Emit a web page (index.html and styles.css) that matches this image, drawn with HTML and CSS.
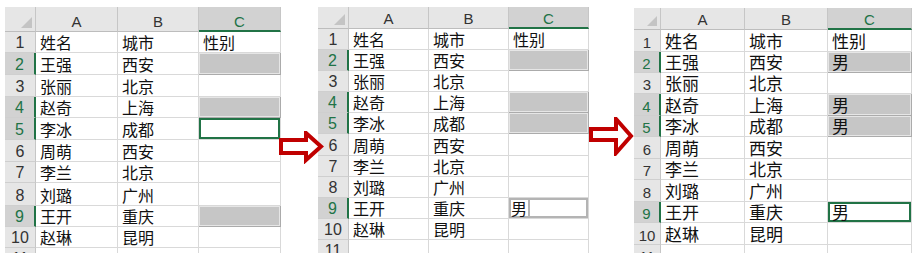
FILE: index.html
```html
<!DOCTYPE html>
<html lang="zh">
<head>
<meta charset="utf-8">
<title>Excel 填充示意</title>
<link rel="stylesheet" href="styles.css">
</head>
<body>
<div class="stage">
  <div class="sheet p1">
    <div class="hd corner"><span class="tri"></span></div>
    <div class="hd">A</div><div class="hd">B</div><div class="hd on">C</div>
    <div class="rh">1</div><div class="c">姓名</div><div class="c">城市</div><div class="c">性别</div>
    <div class="rh on">2</div><div class="c">王强</div><div class="c">西安</div><div class="c g"></div>
    <div class="rh">3</div><div class="c">张丽</div><div class="c">北京</div><div class="c"></div>
    <div class="rh on">4</div><div class="c">赵奇</div><div class="c">上海</div><div class="c g"></div>
    <div class="rh on">5</div><div class="c">李冰</div><div class="c">成都</div><div class="c act"></div>
    <div class="rh">6</div><div class="c">周萌</div><div class="c">西安</div><div class="c"></div>
    <div class="rh">7</div><div class="c">李兰</div><div class="c">北京</div><div class="c"></div>
    <div class="rh">8</div><div class="c">刘璐</div><div class="c">广州</div><div class="c"></div>
    <div class="rh on">9</div><div class="c">王开</div><div class="c">重庆</div><div class="c g"></div>
    <div class="rh">10</div><div class="c">赵琳</div><div class="c">昆明</div><div class="c"></div>
    <div class="rh">11</div><div class="c"></div><div class="c"></div><div class="c"></div>
  </div>

  <div class="sheet p2">
    <div class="hd corner"><span class="tri"></span></div>
    <div class="hd">A</div><div class="hd">B</div><div class="hd on">C</div>
    <div class="rh">1</div><div class="c">姓名</div><div class="c">城市</div><div class="c">性别</div>
    <div class="rh on">2</div><div class="c">王强</div><div class="c">西安</div><div class="c g"></div>
    <div class="rh">3</div><div class="c">张丽</div><div class="c">北京</div><div class="c"></div>
    <div class="rh on">4</div><div class="c">赵奇</div><div class="c">上海</div><div class="c g"></div>
    <div class="rh on">5</div><div class="c">李冰</div><div class="c">成都</div><div class="c g"></div>
    <div class="rh">6</div><div class="c">周萌</div><div class="c">西安</div><div class="c"></div>
    <div class="rh">7</div><div class="c">李兰</div><div class="c">北京</div><div class="c"></div>
    <div class="rh">8</div><div class="c">刘璐</div><div class="c">广州</div><div class="c"></div>
    <div class="rh on">9</div><div class="c">王开</div><div class="c">重庆</div><div class="c edit"><span class="typed">男</span><span class="box"></span></div>
    <div class="rh">10</div><div class="c">赵琳</div><div class="c">昆明</div><div class="c"></div>
    <div class="rh">11</div><div class="c"></div><div class="c"></div><div class="c"></div>
  </div>

  <div class="sheet p3">
    <div class="hd corner"><span class="tri"></span></div>
    <div class="hd">A</div><div class="hd">B</div><div class="hd on">C</div>
    <div class="rh">1</div><div class="c">姓名</div><div class="c">城市</div><div class="c">性别</div>
    <div class="rh on">2</div><div class="c">王强</div><div class="c">西安</div><div class="c g">男</div>
    <div class="rh">3</div><div class="c">张丽</div><div class="c">北京</div><div class="c"></div>
    <div class="rh on">4</div><div class="c">赵奇</div><div class="c">上海</div><div class="c g">男</div>
    <div class="rh on">5</div><div class="c">李冰</div><div class="c">成都</div><div class="c g">男</div>
    <div class="rh">6</div><div class="c">周萌</div><div class="c">西安</div><div class="c"></div>
    <div class="rh">7</div><div class="c">李兰</div><div class="c">北京</div><div class="c"></div>
    <div class="rh">8</div><div class="c">刘璐</div><div class="c">广州</div><div class="c"></div>
    <div class="rh on">9</div><div class="c">王开</div><div class="c">重庆</div><div class="c act">男</div>
    <div class="rh">10</div><div class="c">赵琳</div><div class="c">昆明</div><div class="c"></div>
    <div class="rh">11</div><div class="c"></div><div class="c"></div><div class="c"></div>
  </div>

  <svg class="arrow a1" width="45" height="33" viewBox="0 0 45 33">
    <polygon points="2,9 27,9 27,2 42,15.5 27,29 27,22 2,22" fill="#fff" stroke="#c00000" stroke-width="4" stroke-linejoin="miter"/>
  </svg>
  <svg class="arrow a2" width="45" height="39" viewBox="0 0 45 39">
    <polygon points="2,12 27,12 27,2 42,19 27,36 27,23 2,23" fill="#fff" stroke="#c00000" stroke-width="4" stroke-linejoin="miter"/>
  </svg>
</div>
</body>
</html>
```

FILE: styles.css
```css
* { box-sizing: border-box; }
html, body { margin: 0; padding: 0; background: #fff; }
body { font-family: "Liberation Sans", "Noto Sans CJK SC", sans-serif; }

.stage {
  position: relative;
  width: 920px;
  height: 263px;
  display: flex;
  align-items: flex-start;
  overflow: hidden;
}

.sheet {
  display: grid;
  overflow: hidden;
  background: #fff;
}

.p1 {
  margin: 7px 0 0 5px;
  height: 246px;
  grid-template-columns: 31px 82px 81px 82px;
  grid-template-rows: 25px 21px 22px 22px 21px 22px 22px 21px 23px 21px 21px 21px;
}
.p2 {
  margin: 7px 0 0 37px;
  height: 246px;
  grid-template-columns: 31px 80px 80px 80px;
  grid-template-rows: 22px 21px 21px 21px 21px 21px 22px 21px 21px 21px 21px 21px;
}
.p3 {
  margin: 8px 0 0 45px;
  height: 245px;
  grid-template-columns: 27px 84px 83px 84px;
  grid-template-rows: 22px 22px 21px 21px 22px 21px 22px 21px 22px 21px 22px 21px;
}

/* column headers */
.hd {
  background: #e6e6e6;
  border-right: 1px solid #c6c6c6;
  border-bottom: 1px solid #bdbdbd;
  font-family: "Liberation Sans", sans-serif;
  font-size: 15px;
  color: #333;
  display: flex;
  align-items: flex-end;
  justify-content: center;
  padding-bottom: 2px;
  line-height: 1;
}
.hd.on {
  background: #d2d2d2;
  color: #217346;
  border-bottom: 2px solid #217346;
  padding-bottom: 1px;
}
.corner {
  justify-content: flex-end;
  align-items: flex-end;
  padding: 0 3px 3px 0;
}
.tri {
  width: 11px;
  height: 11px;
  background: #c4c4c4;
  clip-path: polygon(100% 0, 100% 100%, 0 100%);
}
.p3 .tri { width: 10px; height: 10px; }

/* row headers */
.rh {
  background: #e6e6e6;
  border-right: 1px solid #c6c6c6;
  border-bottom: 1px solid #cfcfcf;
  font-family: "Liberation Sans", sans-serif;
  font-size: 16px;
  color: #333;
  display: flex;
  align-items: flex-end;
  justify-content: center;
  padding-bottom: 1px;
  line-height: 1;
}
.rh.on {
  background: #d2d2d2;
  color: #217346;
  border-right: 2px solid #217346;
}
.p3 .rh { font-size: 15px; }

/* data cells: Latin primary font keeps the line box compact, CJK glyphs fall back */
.c {
  border-right: 1px solid #d9d9d9;
  border-bottom: 1px solid #d9d9d9;
  font-family: "Liberation Sans", "Noto Sans CJK SC", sans-serif;
  font-size: 16px;
  line-height: 1;
  color: #111;
  display: flex;
  align-items: flex-end;
  padding: 0 0 0 4px;
  white-space: nowrap;
}
.p3 .c { font-size: 17px; }

.c.g {
  background: #c6c6c6;
  box-shadow: inset 0 0 0 1px #e6e6e6;
  border-right-color: #ababab;
  border-bottom-color: #ababab;
}
.c.act {
  box-shadow: inset 0 0 0 2px #217346;
}
.c.edit {
  padding: 0;
  box-shadow: inset 0 0 0 2px #b4b4b4;
  align-items: stretch;
}
.typed {
  display: flex;
  align-items: flex-end;
  padding: 0 1px 0 2px;
}
.box {
  flex: 1;
  border-left: 2px solid #b4b4b4;
}

/* overlay arrows */
.arrow { position: absolute; }
.a1 { left: 279px; top: 131px; }
.a2 { left: 589px; top: 117px; }
```
